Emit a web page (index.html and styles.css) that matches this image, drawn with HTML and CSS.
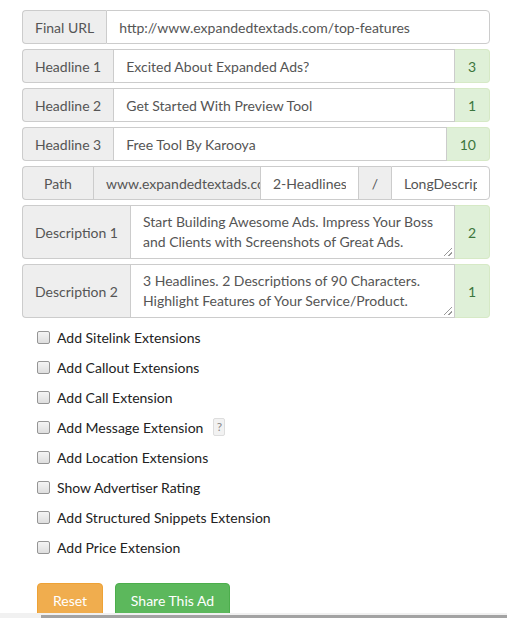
FILE: index.html
```html
<!DOCTYPE html>
<html>
<head>
<meta charset="utf-8">
<link rel="stylesheet" href="styles.css">
</head>
<body>
<div class="form">
  <div class="group">
    <div class="addon label">Final URL</div>
    <div class="field last"><span>http://www.expandedtextads.com/top-features</span></div>
  </div>
  <div class="group">
    <div class="addon label">Headline 1</div>
    <div class="field"><span>Excited About Expanded Ads?</span></div>
    <div class="count">3</div>
  </div>
  <div class="group">
    <div class="addon label">Headline 2</div>
    <div class="field"><span>Get Started With Preview Tool</span></div>
    <div class="count">1</div>
  </div>
  <div class="group">
    <div class="addon label">Headline 3</div>
    <div class="field"><span>Free Tool By Karooya</span></div>
    <div class="count">10</div>
  </div>
  <div class="group">
    <div class="addon label path-label">Path</div>
    <div class="addon domain"><span>www.expandedtextads.com</span></div>
    <div class="field path1"><span>2-Headlines</span></div>
    <div class="addon slash">/</div>
    <div class="field last path2"><span>LongDescription</span></div>
  </div>
  <div class="group tall">
    <div class="addon label">Description 1</div>
    <div class="field area"><span>Start Building Awesome Ads. Impress Your Boss and Clients with Screenshots of Great Ads.</span><i class="grip"></i></div>
    <div class="count">2</div>
  </div>
  <div class="group tall">
    <div class="addon label">Description 2</div>
    <div class="field area"><span>3 Headlines. 2 Descriptions of 90 Characters. Highlight Features of Your Service/Product.</span><i class="grip"></i></div>
    <div class="count">1</div>
  </div>

  <ul class="checks">
    <li><span class="box"></span>Add Sitelink Extensions</li>
    <li><span class="box"></span>Add Callout Extensions</li>
    <li><span class="box"></span>Add Call Extension</li>
    <li><span class="box"></span>Add Message Extension<span class="help">?</span></li>
    <li><span class="box"></span>Add Location Extensions</li>
    <li><span class="box"></span>Show Advertiser Rating</li>
    <li><span class="box"></span>Add Structured Snippets Extension</li>
    <li><span class="box"></span>Add Price Extension</li>
  </ul>

  <div class="buttons">
    <button class="btn reset">Reset</button>
    <button class="btn share">Share This Ad</button>
  </div>
</div>
<div class="hscroll"><div class="thumb"></div></div>
</body>
</html>
```

FILE: styles.css
```css
html, body {
  margin: 0;
  padding: 0;
  background: #fff;
  overflow: hidden;
}
body {
  font-family: Lato, "Liberation Sans", sans-serif;
  font-size: 14px;
  color: #333;
}
.form {
  width: 468px;
  padding: 10px 0 0 22px;
}
.group {
  display: flex;
  height: 34px;
  margin-bottom: 5px;
  box-sizing: border-box;
}
.group.tall {
  height: 54px;
}
.addon {
  display: flex;
  align-items: center;
  justify-content: center;
  box-sizing: border-box;
  background: #eee;
  color: #555;
  border: 1px solid #ccc;
  border-right: 0;
  padding: 0 12px;
  white-space: nowrap;
  flex: none;
}
.label {
  border-radius: 4px 0 0 4px;
}
.field {
  flex: 1;
  min-width: 0;
  box-sizing: border-box;
  border: 1px solid #ccc;
  background: #fff;
  color: #555;
  padding: 0 12px;
  display: flex;
  align-items: center;
  position: relative;
}
.field span {
  display: block;
  white-space: nowrap;
  overflow: hidden;
}
.field.last {
  border-radius: 0 4px 4px 0;
}
.count {
  flex: none;
  display: flex;
  align-items: center;
  justify-content: center;
  box-sizing: border-box;
  padding: 0 13px;
  background: #dff0d8;
  color: #3c763d;
  border: 1px solid #d6e9c6;
  border-left: 0;
  border-radius: 0 4px 4px 0;
}
.path-label {
  width: 71px;
}
.domain {
  width: 167px;
  justify-content: flex-start;
  overflow: hidden;
}
.domain span {
  display: block;
  white-space: nowrap;
}
.path1 {
  flex: none;
  width: 98px;
  border-right: 0;
}
.slash {
  width: 33px;
  padding: 0;
}
.path2 {
  flex: none;
  width: 99px;
}
.area {
  align-items: flex-start;
  padding-top: 6px;
}
.area span {
  white-space: normal;
  line-height: 20px;
}
.grip {
  position: absolute;
  right: 2px;
  bottom: 2px;
  width: 8px;
  height: 8px;
  background: linear-gradient(135deg, transparent 45%, #999 45%, #999 55%, transparent 55%, transparent 72%, #999 72%, #999 82%, transparent 82%);
}
.checks {
  list-style: none;
  margin: -1px 0 0;
  padding: 0 0 0 15px;
}
.checks li {
  height: 30px;
  display: flex;
  align-items: center;
  color: #222;
}
.box {
  width: 11px;
  height: 11px;
  border: 1px solid #959595;
  border-radius: 2px;
  background: linear-gradient(#f4f4f4, #dedede);
  margin-right: 7px;
  flex: none;
}
.help {
  display: inline-block;
  margin-left: 10px;
  width: 10px;
  height: 16px;
  line-height: 16px;
  text-align: center;
  border: 1px solid #ddd;
  border-radius: 2px;
  background: #f2f2f2;
  color: #888;
  font-size: 12px;
}
.buttons {
  display: flex;
  gap: 12px;
  margin: 21px 0 0 15px;
}
.btn {
  font-family: Lato, "Liberation Sans", sans-serif;
  font-size: 14px;
  color: #fff;
  height: 34px;
  padding: 0 14px;
  border-radius: 4px;
  border: 1px solid transparent;
}
.reset {
  width: 66px;
  background: #f0ad4e;
  border-color: #eea236;
}
.share {
  width: 115px;
  background: #5cb85c;
  border-color: #4cae4c;
}
.hscroll {
  position: fixed;
  left: 0;
  right: 0;
  bottom: 0;
  height: 5px;
  background: #f1f1f1;
}
.thumb {
  margin: 2px 0 0 41px;
  height: 3px;
  background: #a3a3a3;
}
```
